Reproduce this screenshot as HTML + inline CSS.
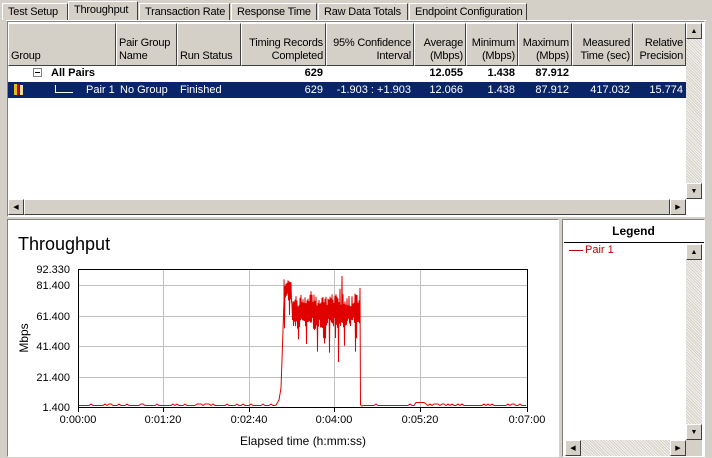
<!DOCTYPE html>
<html><head><meta charset="utf-8"><style>
*{box-sizing:border-box;margin:0;padding:0}
body{width:712px;height:458px;background:#d4d0c8;font-family:"Liberation Sans",sans-serif;font-size:11px;position:relative;overflow:hidden;color:#000}
.a{position:absolute}
.tab{position:absolute;top:3px;height:17px;border:1px solid #fff;border-right:1px solid #404040;border-bottom:none;padding:2px 5px 0 5px;white-space:nowrap;font-size:11px;letter-spacing:-0.2px}
.hd{position:absolute;top:23px;height:43px;background:#d4d0c8;border-left:1px solid #fff;border-top:1px solid #fff;border-right:1px solid #404040;border-bottom:1px solid #404040;padding:2px 2px;line-height:13px;display:flex;align-items:flex-end;justify-content:flex-end;text-align:right;letter-spacing:-0.2px}
.hd.l{justify-content:flex-start;text-align:left}
.c{position:absolute;text-align:right;white-space:nowrap}
.dith{background-color:#ece9e2;background-image:repeating-linear-gradient(45deg,#d4d0c8 0 1px,#f4f2ee 1px 2px)}
.btn{position:absolute;width:16px;height:16px;background:#d4d0c8;border:1px solid;border-color:#fff #404040 #404040 #fff;font-size:7px;color:#000;display:flex;align-items:center;justify-content:center}
</style></head><body>
<div class="tab" style="left:2px;width:66px">Test Setup</div>
<div class="tab" style="left:68px;top:1px;height:20px;width:70px;background:#d4d0c8">Throughput</div>
<div class="tab" style="left:139px;width:91px">Transaction Rate</div>
<div class="tab" style="left:231px;width:86px">Response Time</div>
<div class="tab" style="left:318px;width:90px">Raw Data Totals</div>
<div class="tab" style="left:409px;width:118px">Endpoint Configuration</div>
<div class="a" style="left:6px;top:20px;width:700px;height:1px;background:#fff"></div>
<div class="a" style="left:7px;top:21px;width:698px;height:196px;border:1px solid;border-color:#808080 #fff #fff #808080;background:#fff"></div>
<div class="hd l" style="left:8px;width:108px">Group</div>
<div class="hd l" style="left:116px;width:61px">Pair Group<br>Name</div>
<div class="hd l" style="left:177px;width:64px">Run Status</div>
<div class="hd" style="left:241px;width:85px">Timing Records<br>Completed</div>
<div class="hd" style="left:326px;width:88px">95% Confidence<br>Interval</div>
<div class="hd" style="left:414px;width:52px">Average<br>(Mbps)</div>
<div class="hd" style="left:466px;width:52px">Minimum<br>(Mbps)</div>
<div class="hd" style="left:518px;width:54px">Maximum<br>(Mbps)</div>
<div class="hd" style="left:572px;width:61px">Measured<br>Time (sec)</div>
<div class="hd" style="left:633px;width:53px">Relative<br>Precision</div>
<div class="a" style="left:33px;top:68px;width:9px;height:9px;border:1px solid #808080;background:#fff"></div>
<div class="a" style="left:35px;top:72px;width:5px;height:1px;background:#000"></div>
<div class="a" style="left:51px;top:66px;font-weight:bold;line-height:15px">All Pairs</div>
<div class="c" style="left:260px;width:63px;top:66px;font-weight:bold;line-height:15px">629</div>
<div class="c" style="left:414px;width:49px;top:66px;font-weight:bold;line-height:15px">12.055</div>
<div class="c" style="left:466px;width:49px;top:66px;font-weight:bold;line-height:15px">1.438</div>
<div class="c" style="left:518px;width:51px;top:66px;font-weight:bold;line-height:15px">87.912</div>
<div class="a" style="left:8px;top:82px;width:678px;height:16px;background:#0a246a"></div>
<div class="a" style="left:14px;top:84px;width:3px;height:11px;background:#e0c000"></div>
<div class="a" style="left:17px;top:84px;width:3px;height:11px;background:#c00000"></div>
<div class="a" style="left:20px;top:85px;width:3px;height:10px;background:#e8e0a0"></div>
<div class="a" style="left:55px;top:85px;width:1px;height:7px;background:#fff"></div>
<div class="a" style="left:55px;top:92px;width:18px;height:1px;background:#fff"></div>
<div style="color:#fff">
<div class="c" style="left:86px;top:82px;line-height:16px">Pair 1</div>
<div class="c" style="left:120px;top:82px;line-height:16px">No Group</div>
<div class="c" style="left:180px;top:82px;line-height:16px">Finished</div>
<div class="c" style="left:260px;width:63px;top:82px;line-height:16px">629</div>
<div class="c" style="left:326px;width:85px;top:82px;line-height:16px">-1.903 : +1.903</div>
<div class="c" style="left:414px;width:49px;top:82px;line-height:16px">12.066</div>
<div class="c" style="left:466px;width:49px;top:82px;line-height:16px">1.438</div>
<div class="c" style="left:518px;width:51px;top:82px;line-height:16px">87.912</div>
<div class="c" style="left:572px;width:58px;top:82px;line-height:16px">417.032</div>
<div class="c" style="left:633px;width:50px;top:82px;line-height:16px">15.774</div>
</div>
<div class="a dith" style="left:686px;top:23px;width:16px;height:176px"></div>
<div class="btn" style="left:686px;top:23px">▲</div>
<div class="btn" style="left:686px;top:183px">▼</div>
<div class="a" style="left:8px;top:199px;width:678px;height:16px;background:#d4d0c8"></div>
<div class="btn" style="left:8px;top:199px">◀</div>
<div class="a" style="left:24px;top:199px;width:646px;height:16px;border:1px solid;border-color:#fff #404040 #404040 #fff;background:#d4d0c8"></div>
<div class="btn" style="left:670px;top:199px">▶</div>
<div class="a" style="left:7px;top:219px;width:552px;height:238px;background:#fff;border:1px solid;border-color:#808080 #fff #fff #808080"></div>
<div class="a" style="left:18px;top:234px;font-size:18px">Throughput</div>
<svg class="a" style="left:0;top:0" width="560" height="458" viewBox="0 0 560 458">
<g stroke="#c0c0c0" stroke-width="1">
<line x1="163.5" y1="269" x2="163.5" y2="407"/><line x1="249.5" y1="269" x2="249.5" y2="407"/><line x1="334.5" y1="269" x2="334.5" y2="407"/><line x1="420.5" y1="269" x2="420.5" y2="407"/>
<line x1="78" y1="285.5" x2="527" y2="285.5"/><line x1="78" y1="316.5" x2="527" y2="316.5"/><line x1="78" y1="346.5" x2="527" y2="346.5"/><line x1="78" y1="377.5" x2="527" y2="377.5"/>
</g>
<rect x="78.5" y="269.5" width="449" height="138" fill="none" stroke="#000"/>
<g stroke="#000"><line x1="78.5" y1="407" x2="78.5" y2="412"/><line x1="163.5" y1="407" x2="163.5" y2="412"/><line x1="249.5" y1="407" x2="249.5" y2="412"/><line x1="334.5" y1="407" x2="334.5" y2="412"/><line x1="420.5" y1="407" x2="420.5" y2="412"/><line x1="527.5" y1="407" x2="527.5" y2="412"/></g>
<polyline id="pl" fill="none" stroke="#e00000" stroke-width="1" points=""/>
<g font-family="Liberation Sans, sans-serif" font-size="11" fill="#000">
<text x="70" y="273" text-anchor="end">92.330</text>
<text x="70" y="289" text-anchor="end">81.400</text>
<text x="70" y="320" text-anchor="end">61.400</text>
<text x="70" y="350" text-anchor="end">41.400</text>
<text x="70" y="381" text-anchor="end">21.400</text>
<text x="70" y="411" text-anchor="end">1.400</text>
<text x="78" y="423" text-anchor="middle">0:00:00</text>
<text x="163" y="423" text-anchor="middle">0:01:20</text>
<text x="249" y="423" text-anchor="middle">0:02:40</text>
<text x="334" y="423" text-anchor="middle">0:04:00</text>
<text x="420" y="423" text-anchor="middle">0:05:20</text>
<text x="527" y="423" text-anchor="middle">0:07:00</text>
<text x="303" y="445" text-anchor="middle" font-size="12">Elapsed time (h:mm:ss)</text>
<text transform="translate(28,338) rotate(-90)" text-anchor="middle" font-size="12">Mbps</text>
</g>
</svg>
<div class="a" style="left:562px;top:219px;width:143px;height:238px;border:1px solid;border-color:#808080 #fff #fff #808080;background:#fff"></div>
<div class="a" style="left:563px;top:224px;width:141px;text-align:center;font-weight:bold;font-size:12px">Legend</div>
<div class="a" style="left:564px;top:242px;width:140px;height:1px;background:#000"></div>
<div class="a" style="left:569px;top:250px;width:14px;height:1px;background:#c00000"></div>
<div class="a" style="left:585px;top:244px;color:#c00000;font-size:11px">Pair 1</div>
<div class="a dith" style="left:686px;top:244px;width:16px;height:196px"></div>
<div class="btn" style="left:686px;top:244px">▲</div>
<div class="btn" style="left:686px;top:424px">▼</div>
<div class="a dith" style="left:565px;top:440px;width:121px;height:16px"></div>
<div class="btn" style="left:565px;top:440px">◀</div>
<div class="btn" style="left:670px;top:440px">▶</div>
<div class="a" style="left:686px;top:440px;width:16px;height:16px;background:#d4d0c8"></div>
<script>
var s=12345;function r(){s=(s*1103515245+12345)%2147483648;return s/2147483648;}
var p=[];
for(var x=79;x<276;x+=2){p.push(x+","+(405.5-(r()<0.3?1.5:0)));}
p.push("276,405","279,400","281,388","282,360","283,330","284,300");
var up=true;
for(var x=284;x<=360;x+=0.5){
 var c=x<292?290:312, amp=x<292?12:18, y;
 y=up?c-amp*(0.3+r()*0.7):c+amp*(0.3+r()*0.7);
 if(!up&&r()<0.1)y+=15+r()*15;
 if(up&&r()<0.06)y-=12;
 if(Math.abs(x-338.5)<0.3)y=362;
 if(Math.abs(x-342)<0.3)y=276;
 p.push(x+","+y.toFixed(1));up=!up;
}
p.push("360.5,405","362,406");
for(var x=364;x<=527;x+=2){var y=405.5-(x>415&&x<425?3:(r()<0.3?1.5:0));p.push(x+","+y);}
document.getElementById("pl").setAttribute("points",p.join(" "));
</script>
</body></html>
